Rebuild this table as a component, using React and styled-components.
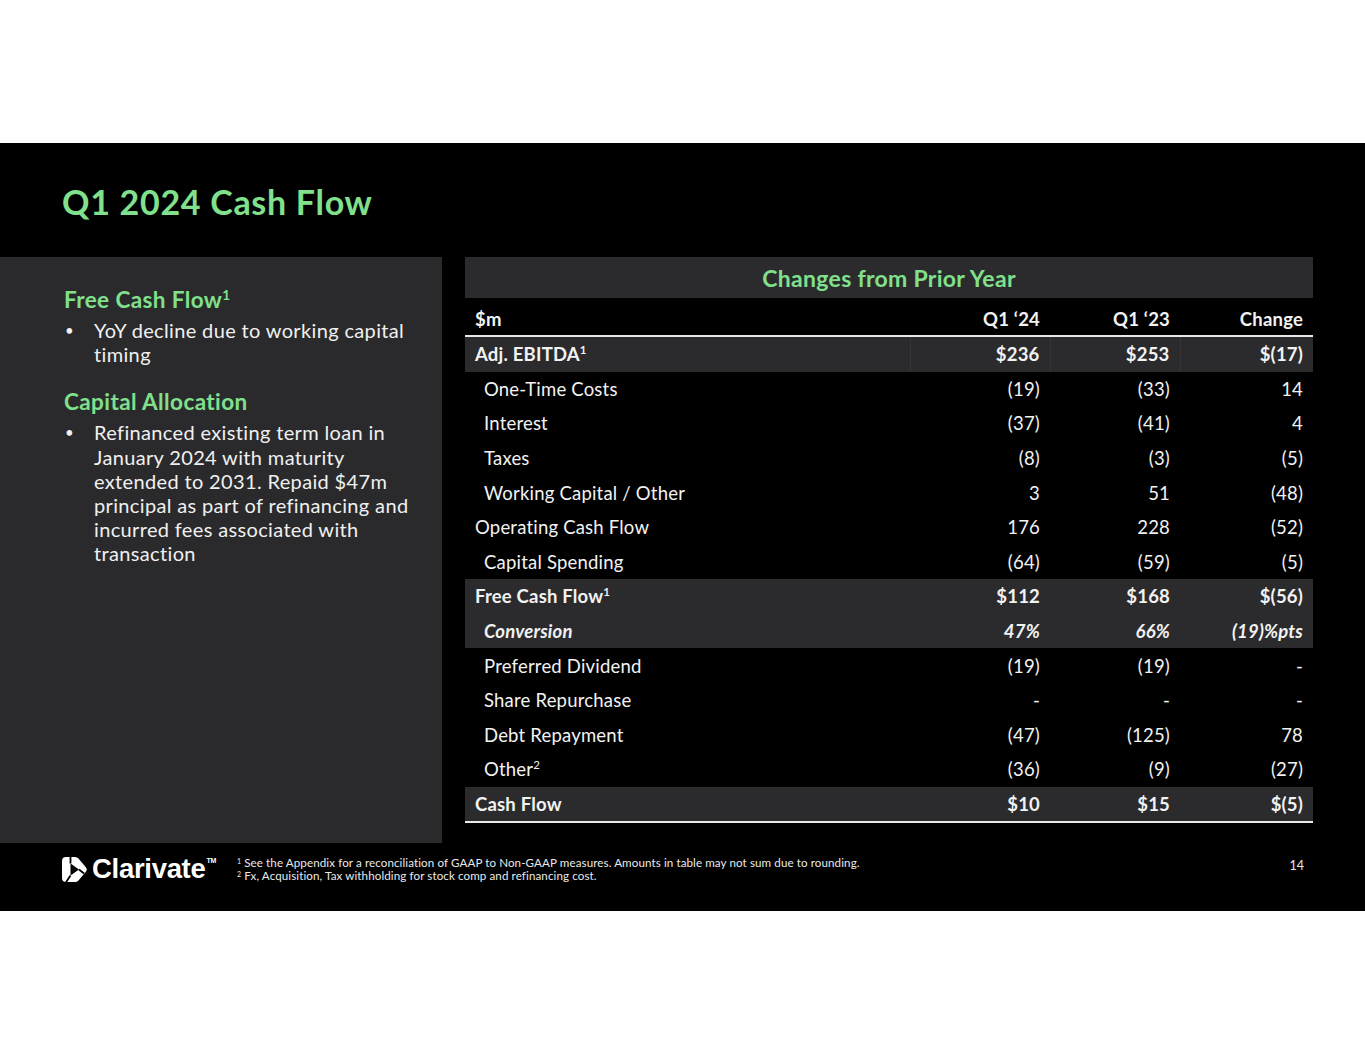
import styled, { createGlobalStyle } from 'styled-components';

const GlobalStyle = createGlobalStyle`
  body {
    margin: 0;
    background: #ffffff;
    font-family: 'Lato', 'Noto Sans', sans-serif;
  }
`;

const Page = styled.div`
  width: 1365px;
  padding-top: 143px;
  padding-bottom: 144px;
`;

const Slide = styled.section`
  background: #000;
  height: 768px;
  display: flex;
  flex-direction: column;
  color: #f2f2f2;
`;

const TitleBar = styled.header`
  height: 114px;
  box-sizing: border-box;
  padding: 38px 0 0 62px;
  h1 {
    margin: 0;
    font-size: 34px;
    font-weight: 700;
    color: #80e08c;
    letter-spacing: 0.7px;
  }
`;

const Body = styled.div`
  display: flex;
  height: 586px;
`;

const SidePanel = styled.aside`
  width: 442px;
  box-sizing: border-box;
  background: #2a2a2c;
  padding: 29px 24px 0 64px;
`;

const SectionTitle = styled.h2`
  margin: 0 0 5px;
  font-size: 22.5px;
  font-weight: 700;
  letter-spacing: 0.4px;
  color: #80e08c;
  sup {
    font-size: 0.6em;
    vertical-align: 0.6em;
    line-height: 0;
  }
`;

const Bullets = styled.ul`
  margin: 0 0 22px;
  padding: 0 0 0 30px;
  li {
    font-size: 20px;
    line-height: 24.2px;
    letter-spacing: 0.35px;
    color: #f0f0f0;
    list-style: none;
    position: relative;
  }
  li::before {
    content: '•';
    position: absolute;
    left: -29px;
    font-size: 15px;
  }
`;

const TableWrap = styled.div`
  margin-left: 23px;
  width: 848px;
`;

const Table = styled.table`
  width: 100%;
  border-collapse: collapse;
  table-layout: fixed;
  font-size: 18.5px;
  letter-spacing: 0.2px;
`;

const BandCell = styled.th`
  background: #2b2b2e;
  height: 41px;
  padding: 0;
  text-align: center;
  color: #80e08c;
  font-size: 23px;
  font-weight: 700;
  letter-spacing: 0.3px;
  border-bottom: 2px solid #000;
`;

const HeadRow = styled.tr`
  border-top: 2px solid #e8e8e8;
  border-bottom: 2px solid #e8e8e8;
  th {
    height: 32px;
    padding: 3px 10px 0;
    font-weight: 700;
    text-align: right;
  }
  th:first-child {
    text-align: left;
  }
`;

const Row = styled.tr`
  background: ${(p) => (p.$shade ? '#2b2b2e' : 'transparent')};
  font-weight: ${(p) => (p.$bold ? 700 : 400)};
  font-style: ${(p) => (p.$italic ? 'italic' : 'normal')};
  border-bottom: ${(p) => (p.$last ? '2px solid #e8e8e8' : 'none')};
  td {
    height: 34.6px;
    padding: 0 10px 0 0;
    text-align: right;
    white-space: nowrap;
  }
  td:first-child {
    text-align: left;
    padding-left: ${(p) => (p.$indent ? '19px' : '10px')};
  }
  td + td {
    border-left: ${(p) => (p.$grid ? '1px solid #353538' : 'none')};
  }
  sup {
    font-size: 0.62em;
    vertical-align: 0.6em;
    line-height: 0;
    font-weight: inherit;
  }
`;

const Footer = styled.footer`
  height: 68px;
  display: flex;
  align-items: flex-start;
  padding: 10px 0 0 62px;
  box-sizing: border-box;
`;

const Logo = styled.div`
  display: flex;
  align-items: center;
  gap: 5px;
  color: #fff;
  font-family: 'Liberation Sans', Arial, sans-serif;
  font-weight: 700;
  font-size: 27.5px;
  letter-spacing: -0.3px;
  sup {
    font-size: 7px;
    vertical-align: 15px;
    margin-left: 1px;
    line-height: 0;
  }
`;

const Notes = styled.div`
  margin-left: 21px;
  margin-top: 4px;
  font-size: 11.6px;
  line-height: 12.8px;
  letter-spacing: 0.1px;
  color: #eaeaea;
  sup {
    font-size: 7px;
    vertical-align: 3px;
    line-height: 0;
  }
`;

const PageNum = styled.div`
  margin-left: auto;
  margin-right: 61px;
  margin-top: 5px;
  font-size: 12.5px;
  color: #eaeaea;
`;

const rows = [
  { label: 'Adj. EBITDA', sup: '1', v: ['$236', '$253', '$(17)'], bold: true, shade: true, grid: true },
  { label: 'One-Time Costs', v: ['(19)', '(33)', '14'], indent: true },
  { label: 'Interest', v: ['(37)', '(41)', '4'], indent: true },
  { label: 'Taxes', v: ['(8)', '(3)', '(5)'], indent: true },
  { label: 'Working Capital / Other', v: ['3', '51', '(48)'], indent: true },
  { label: 'Operating Cash Flow', v: ['176', '228', '(52)'] },
  { label: 'Capital Spending', v: ['(64)', '(59)', '(5)'], indent: true },
  { label: 'Free Cash Flow', sup: '1', v: ['$112', '$168', '$(56)'], bold: true, shade: true },
  { label: 'Conversion', v: ['47%', '66%', '(19)%pts'], bold: true, italic: true, shade: true, indent: true },
  { label: 'Preferred Dividend', v: ['(19)', '(19)', '-'], indent: true },
  { label: 'Share Repurchase', v: ['-', '-', '-'], indent: true },
  { label: 'Debt Repayment', v: ['(47)', '(125)', '78'], indent: true },
  { label: 'Other', sup: '2', v: ['(36)', '(9)', '(27)'], indent: true },
  { label: 'Cash Flow', v: ['$10', '$15', '$(5)'], bold: true, shade: true, last: true },
];

// pinwheel mark: rounded outline with a triangular hole and three cuts
const ClarivateMark = () => (
  <svg width="25" height="25" viewBox="0 0 25 25">
    <path
      fillRule="evenodd"
      fill="#fff"
      d="M4 0 L13 0 Q15 0 16.5 1.5 L24 10.5 Q25.5 12.5 24 14.5 L16.5 23.5 Q15 25 13 25 L4 25 Q0 25 0 21 L0 4 Q0 0 4 0 Z M8.5 6.5 L8.5 18.5 L17 12.5 Z"
    />
    <path d="M8.5 6.5 L8.5 -1 M17 12.5 L22 16.5 M8.5 18.5 L3.5 26" stroke="#000" strokeWidth="1.8" />
  </svg>
);

export default function App() {
  return (
    <>
      <GlobalStyle />
      <Page>
        <Slide>
          <TitleBar>
            <h1>Q1 2024 Cash Flow</h1>
          </TitleBar>
          <Body>
            <SidePanel>
              <SectionTitle>
                Free Cash Flow<sup>1</sup>
              </SectionTitle>
              <Bullets>
                <li>YoY decline due to working capital timing</li>
              </Bullets>
              <SectionTitle>Capital Allocation</SectionTitle>
              <Bullets>
                <li>
                  Refinanced existing term loan in January 2024 with maturity
                  extended to 2031. Repaid $47m principal as part of refinancing
                  and incurred fees associated with transaction
                </li>
              </Bullets>
            </SidePanel>
            <TableWrap>
              <Table>
                <colgroup>
                  <col style={{ width: 445 }} />
                  <col style={{ width: 140 }} />
                  <col style={{ width: 130 }} />
                  <col style={{ width: 133 }} />
                </colgroup>
                <thead>
                  <tr>
                    <BandCell colSpan={4}>Changes from Prior Year</BandCell>
                  </tr>
                  <HeadRow>
                    <th>$m</th>
                    <th>Q1 ‘24</th>
                    <th>Q1 ‘23</th>
                    <th>Change</th>
                  </HeadRow>
                </thead>
                <tbody>
                  {rows.map((r) => (
                    <Row
                      key={r.label}
                      $bold={r.bold}
                      $shade={r.shade}
                      $italic={r.italic}
                      $indent={r.indent}
                      $grid={r.grid}
                      $last={r.last}
                    >
                      <td>
                        {r.label}
                        {r.sup && <sup>{r.sup}</sup>}
                      </td>
                      {r.v.map((x, i) => (
                        <td key={i}>{x}</td>
                      ))}
                    </Row>
                  ))}
                </tbody>
              </Table>
            </TableWrap>
          </Body>
          <Footer>
            <Logo>
              <ClarivateMark />
              <span>
                Clarivate<sup>TM</sup>
              </span>
            </Logo>
            <Notes>
              <div>
                <sup>1</sup> See the Appendix for a reconciliation of GAAP to Non-GAAP measures. Amounts in table may not sum due to rounding.
              </div>
              <div>
                <sup>2</sup> Fx, Acquisition, Tax withholding for stock comp and refinancing cost.
              </div>
            </Notes>
            <PageNum>14</PageNum>
          </Footer>
        </Slide>
      </Page>
    </>
  );
}
